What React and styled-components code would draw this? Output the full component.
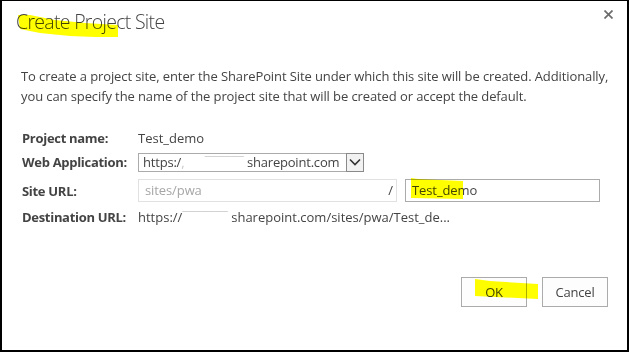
import React from "react";
import styled, { createGlobalStyle } from "styled-components";

const Global = createGlobalStyle`
  html, body { margin: 0; padding: 0; background: #fff; }
  body { font-family: "Open Sans", "Liberation Sans", sans-serif; }
`;

const Dialog = styled.div`
  position: relative;
  box-sizing: border-box;
  width: 629px;
  height: 352px;
  border-style: solid;
  border-color: #000;
  border-width: 1px 2px 2px 2px;
  background: #fff;
  display: flex;
  flex-direction: column;
`;

const Header = styled.div`
  display: flex;
  justify-content: space-between;
  align-items: flex-start;
  padding: 7px 14px 0 14px;
  height: 30px;
`;

const Title = styled.h1`
  margin: 0;
  font-family: "Open Sans", sans-serif;
  font-weight: 300;
  font-size: 19.5px;
  line-height: 28px;
  color: #444;
  letter-spacing: -0.7px;
`;

const Close = styled.button`
  border: 0;
  background: none;
  padding: 0;
  margin-top: 2px;
  width: 9px;
  height: 9px;
  display: flex;
  align-items: center;
  justify-content: center;
  cursor: pointer;
`;

const Intro = styled.p`
  margin: 28px 0 0 0;
  padding: 0 4px 0 19px;
  font-family: "Open Sans", sans-serif;
  font-size: 13px;
  line-height: 20px;
  color: #444;
  letter-spacing: -0.1px;
  white-space: nowrap;
`;

const Form = styled.div`
  margin-top: 22px;
  padding-left: 20px;
  display: flex;
  flex-direction: column;
`;

const Row = styled.div`
  display: flex;
  align-items: center;
  height: ${(p) => p.$h}px;
  margin-top: ${(p) => p.$mt}px;
`;

const Label = styled.div`
  width: 116px;
  font-family: "Open Sans", sans-serif;
  font-weight: 700;
  font-size: 13px;
  color: #444;
  letter-spacing: -0.3px;
  white-space: nowrap;
`;

const Value = styled.div`
  font-family: "Open Sans", sans-serif;
  font-size: 13px;
  color: #444;
  letter-spacing: 0;
  white-space: nowrap;
`;

const Select = styled.div`
  display: flex;
  align-items: stretch;
  height: 19px;
`;

const SelectText = styled.div`
  box-sizing: border-box;
  width: 208px;
  border: 1px solid #ababab;
  border-right: 0;
  padding: 0 0 0 4px;
  font-family: "Open Sans", sans-serif;
  font-size: 13px;
  line-height: 17px;
  color: #444;
  letter-spacing: -0.2px;
  white-space: nowrap;
  overflow: hidden;
`;

const Blur = styled.span`
  color: #c8c8c8;
  letter-spacing: 0;
`;

const SelectButton = styled.div`
  box-sizing: border-box;
  width: 18px;
  border: 1px solid #8a8a8a;
  background: #f2f2f2;
  display: flex;
  align-items: center;
  justify-content: center;
`;

const Field = styled.div`
  box-sizing: border-box;
  width: ${(p) => p.$w}px;
  height: 23px;
  border: 1px solid ${(p) => (p.$disabled ? "#e1e1e1" : "#ababab")};
  padding: 0 6px;
  font-family: "Open Sans", sans-serif;
  font-size: 13px;
  line-height: 21px;
  color: ${(p) => (p.$disabled ? "#a6a6a6" : "#444")};
  letter-spacing: -0.1px;
  display: flex;
  align-items: center;
  justify-content: space-between;
`;

const Slash = styled.span`
  color: #444;
  margin-right: -3px;
`;

const Gap = styled.div`
  width: ${(p) => p.$w}px;
`;

const Footer = styled.div`
  margin-top: auto;
  margin-bottom: 43px;
  padding-right: 19px;
  display: flex;
  justify-content: flex-end;
  gap: 15px;
`;

const Button = styled.button`
  box-sizing: border-box;
  width: 66px;
  height: 30px;
  border: 1px solid #ababab;
  background: #fdfdfd;
  font-family: "Open Sans", sans-serif;
  font-size: 13px;
  color: #444;
  letter-spacing: -0.2px;
  padding: 0;
`;

const Marks = styled.svg`
  position: absolute;
  left: -2px;
  top: -1px;
  width: 629px;
  height: 352px;
  pointer-events: none;
  mix-blend-mode: multiply;
`;

export default function App() {
  return (
    <>
      <Global />
      <Dialog>
        <Header>
          <Title>Create Project Site</Title>
          <Close aria-label="Close">
            <svg width="9" height="9" viewBox="0 0 9 9">
              <path d="M0.5 0.5 L8.5 8.5 M8.5 0.5 L0.5 8.5" stroke="#6b6b6b" strokeWidth="1.7" />
            </svg>
          </Close>
        </Header>
        <Intro>
          To create a project site, enter the SharePoint Site under which this site will be created. Additionally,
          <br />
          you can specify the name of the project site that will be created or accept the default.
        </Intro>
        <Form>
          <Row $h={20} $mt={0}>
            <Label>Project name:</Label>
            <Value>Test_demo</Value>
          </Row>
          <Row $h={20} $mt={4}>
            <Label>Web Application:</Label>
            <Select>
              <SelectText>
                https:/<Blur>,&nbsp;&nbsp;&nbsp;&nbsp;&nbsp;&nbsp;¯¯¯¯¯¯</Blur> sharepoint.com
              </SelectText>
              <SelectButton>
                <svg width="12" height="8" viewBox="0 0 12 8">
                  <path d="M1 1.5 L6 6.5 L11 1.5" fill="none" stroke="#333" strokeWidth="1.6" />
                </svg>
              </SelectButton>
            </Select>
          </Row>
          <Row $h={23} $mt={7}>
            <Label>Site URL:</Label>
            <Field $w={259} $disabled>
              <span>sites/pwa</span>
              <Slash>/</Slash>
            </Field>
            <Gap $w={8} />
            <Field $w={195}>
              <span>Test_demo</span>
            </Field>
          </Row>
          <Row $h={20} $mt={5}>
            <Label>Destination URL:</Label>
            <Value>
              https://<Blur>¯¯¯¯¯¯¯</Blur> sharepoint.com/sites/pwa/Test_de...
            </Value>
          </Row>
        </Form>
        <Footer>
          <Button>OK</Button>
          <Button>Cancel</Button>
        </Footer>
        <Marks viewBox="0 0 629 352">
          <path
            d="M18 15 L30 15 L55 20 L85 23 L118 25 L118 37 L95 37 L70 36 L40 33 L20 29 Z"
            fill="#ffff00"
          />
          <path d="M411 178 L418 179 L463 181 L463 199 L411 198 Z" fill="#ffff00" />
          <path d="M475 279 L490 281 L538 284 L538 299 L475 296 Z" fill="#ffff00" />
        </Marks>
      </Dialog>
    </>
  );
}
